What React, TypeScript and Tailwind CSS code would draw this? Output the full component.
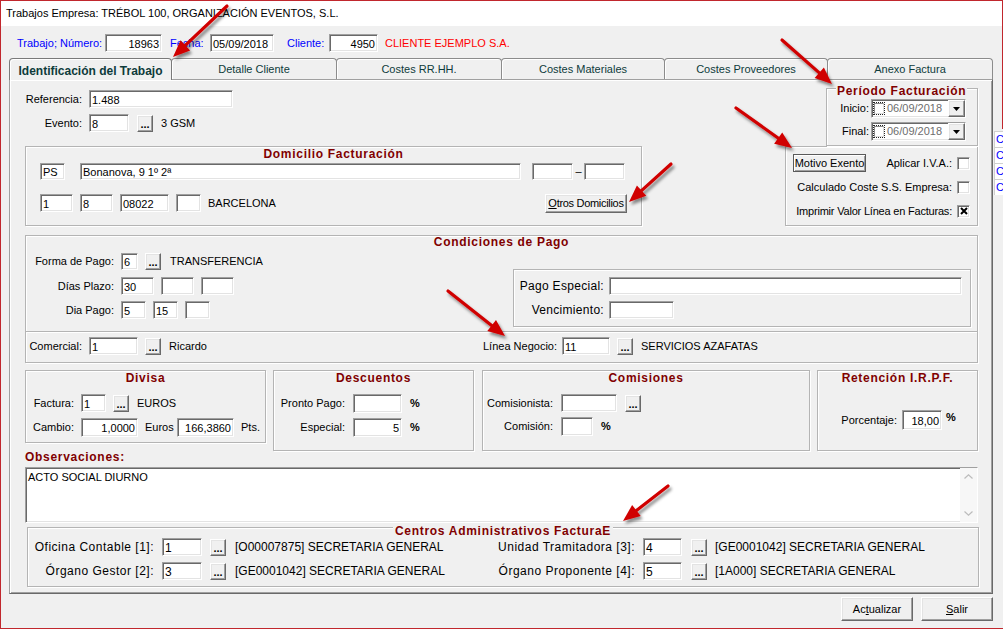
import React from 'react';

const sunken =
  'bg-white border border-t-[#a0a0a0] border-l-[#a0a0a0] border-r-white border-b-white shadow-[inset_1px_1px_0_#696969,inset_-1px_-1px_0_#e3e3e3]';
const raised =
  'bg-[#f0f0f0] border border-t-white border-l-white border-r-[#696969] border-b-[#696969] shadow-[inset_-1px_-1px_0_#a0a0a0,inset_1px_1px_0_#e3e3e3]';
const groupBox = 'border border-[#b4b4b4] shadow-[inset_1px_1px_0_#fff,1px_1px_0_#fff]';
const title = 'font-bold text-[12px] tracking-[0.7px] text-[#800000]';

function Field({
  w,
  h = 'h-[18px]',
  value = '',
  right = false,
  className = '',
}: {
  w: string;
  h?: string;
  value?: string;
  right?: boolean;
  className?: string;
}) {
  return (
    <div
      className={`shrink-0 ${w} ${h} ${sunken} flex items-center px-[2px] pt-[1px] leading-[12px] whitespace-nowrap overflow-hidden ${
        right ? 'justify-end' : ''
      } ${className}`}
    >
      {value}
    </div>
  );
}

function Dots({ className = '' }: { className?: string }) {
  return (
    <div className={`shrink-0 w-[16px] h-[17px] ${raised} flex items-end justify-center pb-[4px] ${className}`}>
      <span className="text-[11px] font-bold leading-[5px]">...</span>
    </div>
  );
}

function Check({ checked = false }: { checked?: boolean }) {
  return (
    <div className={`shrink-0 w-[13px] h-[13px] ${sunken} flex items-center justify-center`}>
      {checked && (
        <svg width="8" height="8" viewBox="0 0 8 8">
          <path d="M1 1L7 7M7 1L1 7" stroke="#000" strokeWidth="2" />
        </svg>
      )}
    </div>
  );
}

function DateBox() {
  return (
    <div className={`shrink-0 w-[95px] h-[19px] ${sunken} flex items-center`}>
      <div className="ml-[1px] w-[12px] h-[13px] border border-dotted border-[#222] flex items-center justify-center">
        <div className="w-[10px] h-[11px] bg-white border border-t-[#8a8a8a] border-l-[#8a8a8a] border-r-[#dcdcdc] border-b-[#dcdcdc]" />
      </div>
      <span className="ml-[2px] text-[#6d6d6d]">06/09/2018</span>
      <div className={`ml-auto w-[17px] h-full ${raised} flex items-center justify-center`}>
        <svg width="7" height="4" viewBox="0 0 7 4">
          <path d="M0 0H7L3.5 4Z" fill="#000" />
        </svg>
      </div>
    </div>
  );
}

function Arrow({ x1, y1, x2, y2 }: { x1: number; y1: number; x2: number; y2: number }) {
  const dx = x2 - x1;
  const dy = y2 - y1;
  const len = Math.hypot(dx, dy);
  const ux = dx / len;
  const uy = dy / len;
  const hl = 17;
  const hw = 7;
  const bx = x2 - ux * hl;
  const by = y2 - uy * hl;
  const px = -uy;
  const py = ux;
  const pts = `${x2},${y2} ${bx + px * hw},${by + py * hw} ${bx - px * hw},${by - py * hw}`;
  return (
    <g filter="url(#shadow)">
      <line x1={x1} y1={y1} x2={bx + ux * 2} y2={by + uy * 2} stroke="#d00000" strokeWidth="3.2" strokeLinecap="round" />
      <polygon points={pts} fill="#d00000" />
    </g>
  );
}

const tabs = [
  { label: 'Identificación del Trabajo', w: 'w-[163px]', active: true },
  { label: 'Detalle Cliente', w: 'w-[166px]' },
  { label: 'Costes RR.HH.', w: 'w-[166px]' },
  { label: 'Costes Materiales', w: 'w-[164px]' },
  { label: 'Costes Proveedores', w: 'w-[164px]' },
  { label: 'Anexo Factura', w: 'w-[166px]' },
];

export default function App() {
  return (
    <div className="relative w-[1003px] h-[629px] overflow-hidden whitespace-nowrap bg-[#f0f0f0] text-black text-[11px] font-['Liberation_Sans',Arial,sans-serif] border-t border-l border-b border-[#c1272d]">
      {/* window title */}
      <div className="h-[25px] bg-white pl-[5px] flex items-center text-[11px]">
        Trabajos Empresa: TRÉBOL 100, ORGANIZACIÓN EVENTOS, S.L.
      </div>

      {/* header fields */}
      <div className="mt-[8px] h-[18px] pl-[16px] flex items-center">
        <span className="w-[88px] text-[#0000ff]">Trabajo; Número:</span>
        <Field w="w-[57px]" value="18963" right />
        <span className="ml-[8px] w-[40px] text-[#0000ff]">Fecha:</span>
        <Field w="w-[64px]" value="05/09/2018" />
        <span className="ml-[13px] w-[42px] text-[#0000ff]">Cliente:</span>
        <Field w="w-[49px]" value="4950" right />
        <span className="ml-[7px] text-[#ff0000]">CLIENTE EJEMPLO S.A.</span>
      </div>

      {/* tabs */}
      <div className="mt-[6px] ml-[8px] h-[21px] flex items-start">
        {tabs.map((t, i) =>
          t.active ? (
            <div
              key={t.label}
              className={`relative z-10 ${t.w} h-[22px] border border-b-0 border-[#7a7a7a] rounded-t-[4px] bg-[#f0f0f0] shadow-[inset_1px_1px_0_#fff] flex items-center justify-center pt-[2px] font-bold text-[12px] text-[#0e3b3b]`}
            >
              {t.label}
            </div>
          ) : (
            <div
              key={t.label}
              className={`${t.w} ${i > 0 ? '-ml-px' : ''} h-[21px] border border-b-0 border-[#8c8c8c] rounded-t-[4px] bg-[#f0f0f0] shadow-[inset_1px_1px_0_#fff] flex items-center justify-center pt-[1px] text-[#0e3b3b]`}
            >
              {t.label}
            </div>
          )
        )}
      </div>

      {/* tab panel */}
      <div className="ml-[8px] w-[984px] h-[515px] border border-[#a0a0a0] border-r-[#696969] border-b-[#696969] shadow-[inset_1px_1px_0_#fff,inset_-1px_-1px_0_#a0a0a0]">
        {/* band 1 */}
        <div className="h-[66px] flex">
          <div>
            <div className="mt-[10px] h-[18px] flex items-center">
              <span className="w-[72px] text-right">Referencia:</span>
              <Field w="w-[144px]" value="1.488" className="ml-[7px]" />
            </div>
            <div className="mt-[6px] h-[18px] flex items-center">
              <span className="w-[72px] text-right">Evento:</span>
              <Field w="w-[40px]" value="8" className="ml-[7px]" />
              <Dots className="ml-[8px]" />
              <span className="ml-[8px]">3 GSM</span>
            </div>
          </div>
          <div className={`relative ml-auto mr-[14px] mt-[8px] w-[152px] h-[58px] ${groupBox}`}>
            <span className={`absolute left-[9px] top-[-5px] px-[1px] bg-[#f0f0f0] leading-[14px] ${title} tracking-[0.3px]`}>
              Período Facturación
            </span>
            <div className="flex flex-col items-end pr-[11px]">
              <div className="mt-[10px] h-[19px] flex items-center">
                <span className="mr-[2px]">Inicio:</span>
                <DateBox />
              </div>
              <div className="mt-[4px] h-[19px] flex items-center">
                <span className="mr-[2px]">Final:</span>
                <DateBox />
              </div>
            </div>
          </div>
        </div>

        {/* band 2 */}
        <div className="h-[80px] flex">
          <div className={`ml-[15px] w-[617px] h-[80px] ${groupBox}`}>
            <div className={`h-[14px] leading-[14px] text-center ${title}`}>Domicilio Facturación</div>
            <div className="mt-[2px] h-[17px] pl-[14px] flex items-center">
              <Field w="w-[25px]" h="h-[17px]" value="PS" />
              <Field w="w-[441px]" h="h-[17px]" value="Bonanova, 9 1º 2ª" className="ml-[15px]" />
              <Field w="w-[41px]" h="h-[17px]" className="ml-[11px]" />
              <span className="w-[11px] text-center">–</span>
              <Field w="w-[41px]" h="h-[17px]" />
            </div>
            <div className="mt-[14px] h-[18px] pl-[14px] flex items-center">
              <Field w="w-[33px]" value="1" />
              <Field w="w-[33px]" value="8" className="ml-[7px]" />
              <Field w="w-[49px]" value="08022" className="ml-[7px]" />
              <Field w="w-[25px]" className="ml-[7px]" />
              <span className="ml-[7px]">BARCELONA</span>
              <div className={`ml-auto mr-[14px] w-[82px] h-[19px] ${raised} flex items-center justify-center tracking-[-0.3px]`}>
                <span>
                  <span className="underline">O</span>tros Domicilios
                </span>
              </div>
            </div>
          </div>
          <div className={`ml-auto mr-[14px] w-[193px] h-[80px] ${groupBox} px-[7px]`}>
            <div className="mt-[7px] h-[18px] flex items-center">
              <div className="w-[73px] h-[18px] bg-[#f0f0f0] border border-[#5a5a5a] shadow-[inset_1px_1px_0_#fff,inset_-1px_-1px_0_#a0a0a0] flex items-center justify-center">
                Motivo Exento
              </div>
              <span className="ml-auto">Aplicar I.V.A.:</span>
              <span className="ml-[5px]">
                <Check />
              </span>
            </div>
            <div className="mt-[6px] h-[18px] flex items-center justify-end">
              <span>Calculado Coste S.S. Empresa:</span>
              <span className="ml-[5px]">
                <Check />
              </span>
            </div>
            <div className="mt-[6px] h-[18px] flex items-center justify-end">
              <span className="tracking-[-0.2px]">Imprimir Valor Línea en Facturas:</span>
              <span className="ml-[5px]">
                <Check checked />
              </span>
            </div>
          </div>
        </div>

        {/* condiciones de pago */}
        <div className={`mt-[9px] ml-[15px] w-[953px] h-[97px] ${groupBox}`}>
          <div className={`h-[13px] leading-[13px] text-center ${title}`}>Condiciones de Pago</div>
          <div className="flex">
            <div className="w-[487px]">
              <div className="mt-[4px] h-[17px] flex items-center">
                <span className="w-[88px] text-right">Forma de Pago:</span>
                <Field w="w-[17px]" h="h-[17px]" value="6" className="ml-[7px]" />
                <Dots className="ml-[7px]" />
                <span className="ml-[9px]">TRANSFERENCIA</span>
              </div>
              <div className="mt-[7px] h-[18px] flex items-center">
                <span className="w-[88px] text-right">Días Plazo:</span>
                <Field w="w-[33px]" value="30" className="ml-[7px]" />
                <Field w="w-[33px]" className="ml-[7px]" />
                <Field w="w-[33px]" className="ml-[7px]" />
              </div>
              <div className="mt-[6px] h-[18px] flex items-center">
                <span className="w-[88px] text-right">Dia Pago:</span>
                <Field w="w-[25px]" value="5" className="ml-[7px]" />
                <Field w="w-[25px]" value="15" className="ml-[7px]" />
                <Field w="w-[25px]" className="ml-[7px]" />
              </div>
            </div>
            <div className={`mt-[20px] w-[458px] h-[58px] ${groupBox} text-[12px]`}>
              <div className="mt-[7px] h-[18px] flex items-center">
                <span className="w-[90px] text-right tracking-[0.3px]">Pago Especial:</span>
                <Field w="w-[353px]" className="ml-[5px]" />
              </div>
              <div className="mt-[6px] h-[18px] flex items-center">
                <span className="w-[90px] text-right tracking-[0.3px]">Vencimiento:</span>
                <Field w="w-[65px]" className="ml-[5px]" />
              </div>
            </div>
          </div>
        </div>
        <div className={`-mt-px ml-[15px] w-[953px] h-[32px] ${groupBox}`}>
          <div className="mt-[5px] h-[18px] flex items-center">
            <div className="w-[457px] flex items-center">
              <span className="w-[56px] text-right">Comercial:</span>
              <Field w="w-[49px]" value="1" className="ml-[7px]" />
              <Dots className="ml-[7px]" />
              <span className="ml-[8px]">Ricardo</span>
            </div>
            <span className="w-[72px] text-right">Línea Negocio:</span>
            <Field w="w-[48px]" value="11" className="ml-[7px]" />
            <Dots className="ml-[7px]" />
            <span className="ml-[8px]">SERVICIOS AZAFATAS</span>
          </div>
        </div>

        {/* band 4 */}
        <div className="mt-[7px] flex items-start">
          <div className={`ml-[15px] w-[241px] h-[73px] ${groupBox}`}>
            <div className={`h-[14px] leading-[14px] text-center ${title}`}>Divisa</div>
            <div className="mt-[9px] h-[18px] flex items-center">
              <span className="w-[48px] text-right">Factura:</span>
              <Field w="w-[25px]" value="1" className="ml-[7px]" />
              <Dots className="ml-[7px]" />
              <span className="ml-[8px]">EUROS</span>
            </div>
            <div className="mt-[6px] h-[19px] flex items-center">
              <span className="w-[48px] text-right">Cambio:</span>
              <Field w="w-[57px]" h="h-[19px]" value="1,0000" right className="ml-[7px]" />
              <span className="ml-[7px] w-[32px]">Euros</span>
              <Field w="w-[57px]" h="h-[19px]" value="166,3860" right />
              <span className="ml-[7px]">Pts.</span>
            </div>
          </div>
          <div className={`ml-[7px] w-[201px] h-[81px] ${groupBox}`}>
            <div className={`h-[14px] leading-[14px] text-center ${title}`}>Descuentos</div>
            <div className="mt-[9px] h-[19px] flex items-center">
              <span className="w-[71px] text-right">Pronto Pago:</span>
              <Field w="w-[49px]" h="h-[19px]" className="ml-[8px]" />
              <span className="ml-[8px] font-bold">%</span>
            </div>
            <div className="mt-[5px] h-[19px] flex items-center">
              <span className="w-[71px] text-right">Especial:</span>
              <Field w="w-[49px]" h="h-[19px]" value="5" right className="ml-[8px]" />
              <span className="ml-[8px] font-bold">%</span>
            </div>
          </div>
          <div className={`ml-[8px] w-[328px] h-[81px] ${groupBox}`}>
            <div className={`h-[14px] leading-[14px] text-center ${title}`}>Comisiones</div>
            <div className="mt-[9px] h-[18px] flex items-center">
              <span className="w-[70px] text-right">Comisionista:</span>
              <Field w="w-[56px]" className="ml-[8px]" />
              <Dots className="ml-[8px]" />
            </div>
            <div className="mt-[5px] h-[19px] flex items-center">
              <span className="w-[70px] text-right">Comisión:</span>
              <Field w="w-[32px]" h="h-[19px]" className="ml-[8px]" />
              <span className="ml-[8px] font-bold">%</span>
            </div>
          </div>
          <div className={`ml-[7px] w-[161px] h-[81px] ${groupBox}`}>
            <div className={`h-[14px] leading-[14px] text-center ${title} tracking-[0.3px]`}>Retención I.R.P.F.</div>
            <div className="mt-[25px] h-[20px] flex items-center">
              <span className="w-[79px] text-right">Porcentaje:</span>
              <Field w="w-[40px]" h="h-[20px]" value="18,00" right className="ml-[5px]" />
              <span className="ml-[4px] mb-[5px] font-bold">%</span>
            </div>
          </div>
        </div>

        {/* observaciones */}
        <div className={`h-[13px] leading-[13px] pl-[15px] ${title}`}>Observaciones:</div>
        <div className={`mt-[3px] ml-[15px] w-[953px] h-[56px] ${sunken} flex`}>
          <div className="flex-1 pl-[2px] pt-[3px] leading-[13px]">ACTO SOCIAL DIURNO</div>
          <div className="w-[17px] h-full bg-[#f7f7f7] flex flex-col justify-between items-center py-[6px]">
            <svg width="9" height="5" viewBox="0 0 9 5">
              <path d="M0.5 4.5L4.5 0.8L8.5 4.5" stroke="#bcbcbc" strokeWidth="1.2" fill="none" />
            </svg>
            <svg width="9" height="5" viewBox="0 0 9 5">
              <path d="M0.5 0.5L4.5 4.2L8.5 0.5" stroke="#bcbcbc" strokeWidth="1.2" fill="none" />
            </svg>
          </div>
        </div>

        {/* centros administrativos */}
        <div className={`relative mt-[4px] ml-[17px] w-[952px] h-[60px] ${groupBox} text-[12px]`}>
          <span
            className={`absolute left-1/2 -translate-x-1/2 top-[-4px] px-[2px] bg-[#f0f0f0] leading-[14px] ${title}`}
          >
            Centros Administrativos FacturaE
          </span>
          <div className="mt-[10px] h-[18px] flex items-center">
            <div className="w-[467px] flex items-center">
              <span className="w-[126px] text-right tracking-[0.5px]">Oficina Contable [1]:</span>
              <Field w="w-[40px]" value="1" className="ml-[8px] text-[12px]" />
              <Dots className="ml-[8px]" />
              <span className="ml-[9px]">[O00007875] SECRETARIA GENERAL</span>
            </div>
            <span className="w-[140px] text-right tracking-[0.5px]">Unidad Tramitadora [3]:</span>
            <Field w="w-[39px]" value="4" className="ml-[8px] text-[12px]" />
            <Dots className="ml-[9px]" />
            <span className="ml-[8px]">[GE0001042] SECRETARIA GENERAL</span>
          </div>
          <div className="mt-[6px] h-[18px] flex items-center">
            <div className="w-[467px] flex items-center">
              <span className="w-[126px] text-right tracking-[0.5px]">Órgano Gestor [2]:</span>
              <Field w="w-[40px]" value="3" className="ml-[8px] text-[12px]" />
              <Dots className="ml-[8px]" />
              <span className="ml-[9px]">[GE0001042] SECRETARIA GENERAL</span>
            </div>
            <span className="w-[140px] text-right tracking-[0.5px]">Órgano Proponente [4]:</span>
            <Field w="w-[39px]" value="5" className="ml-[8px] text-[12px]" />
            <Dots className="ml-[9px]" />
            <span className="ml-[8px]">[1A000] SECRETARIA GENERAL</span>
          </div>
        </div>
      </div>

      {/* bottom buttons */}
      <div className="mt-[3px] pr-[10px] flex justify-end gap-[8px]">
        <div className={`w-[72px] h-[24px] ${raised} flex items-center justify-center`}>
          <span>
            Ac<span className="underline">t</span>ualizar
          </span>
        </div>
        <div className={`w-[72px] h-[24px] ${raised} flex items-center justify-center`}>
          <span>
            <span className="underline">S</span>alir
          </span>
        </div>
      </div>

      {/* control peeking from behind, at the right edge */}
      <div className="absolute left-[993px] top-[130px] w-[10px] overflow-hidden">
        {[0, 1, 2, 3].map((i) => (
          <div
            key={i}
            className="h-[16px] border-t border-l border-[#d0d0d0] bg-white pl-[1px] leading-[15px] text-[#0000ff]"
          >
            Co
          </div>
        ))}
      </div>
      <div className="absolute right-0 top-0 w-px h-[128px] bg-[#c1272d]" />

      {/* annotation arrows */}
      <svg className="absolute inset-0 pointer-events-none" width="1003" height="629" viewBox="0 0 1003 629">
        <defs>
          <filter id="shadow" x="-20%" y="-20%" width="140%" height="140%">
            <feDropShadow dx="2" dy="3" stdDeviation="1.8" floodColor="#000" floodOpacity="0.45" />
          </filter>
        </defs>
        <Arrow x1={226} y1={5} x2={172} y2={56} />
        <Arrow x1={781} y1={39} x2={831} y2={83} />
        <Arrow x1={735} y1={107} x2={791} y2={147} />
        <Arrow x1={670} y1={163} x2={628} y2={201} />
        <Arrow x1={447} y1={290} x2={504} y2={335} />
        <Arrow x1={667} y1={485} x2={622} y2={520} />
      </svg>
    </div>
  );
}
